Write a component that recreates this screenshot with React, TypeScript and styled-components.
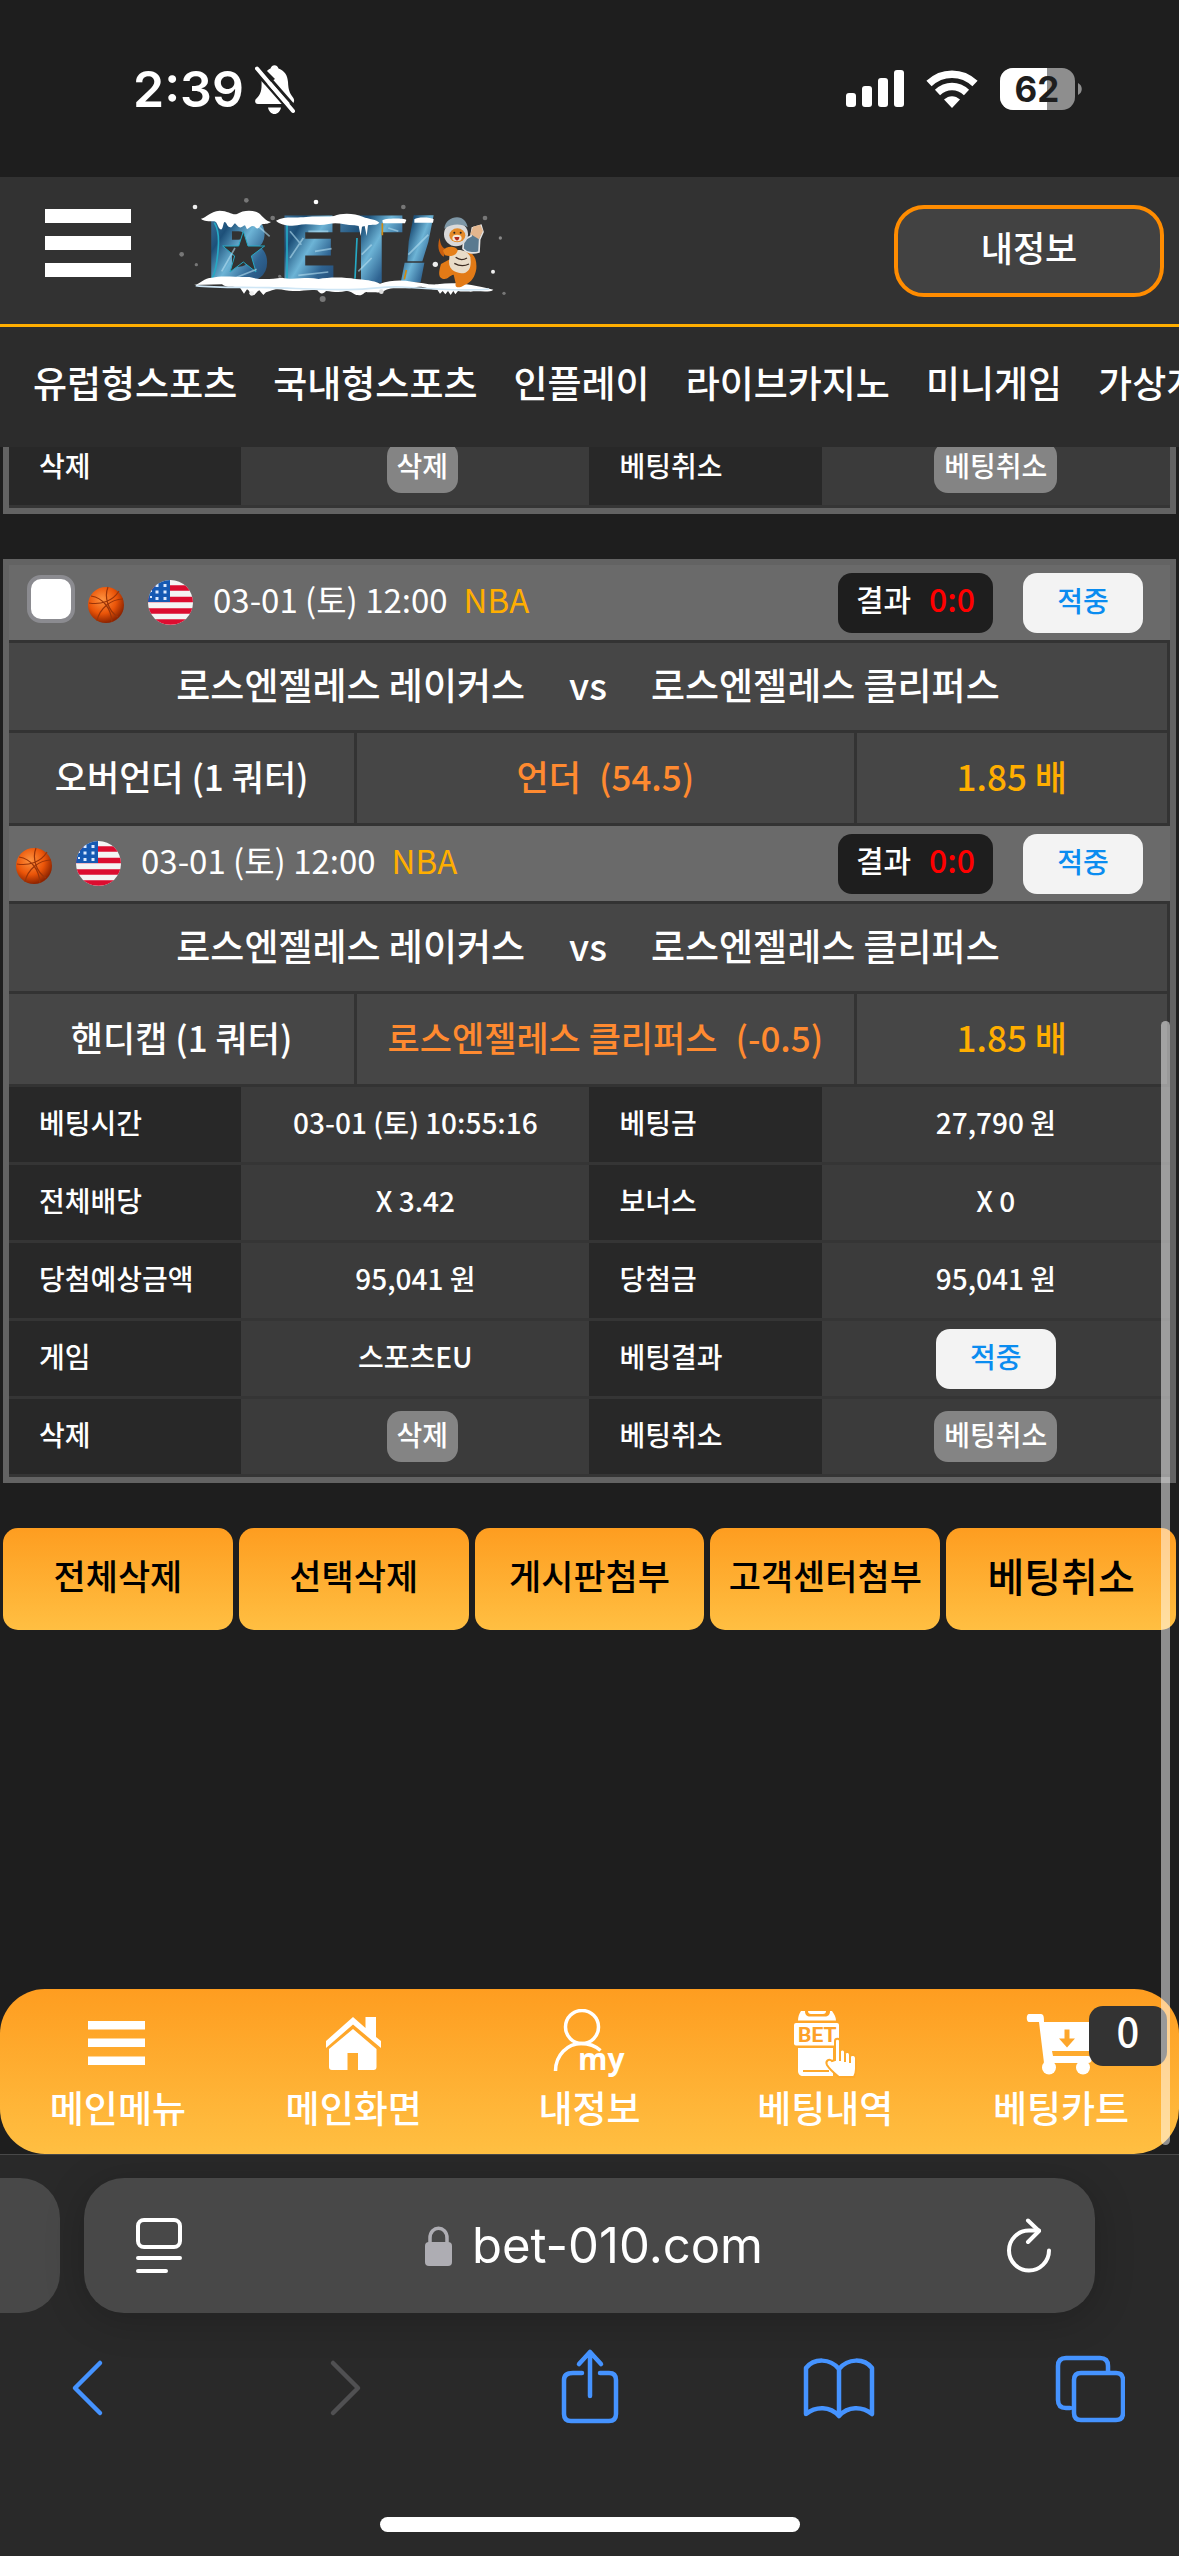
import React from "react";
import styled, { createGlobalStyle } from "styled-components";

const kr = `"Noto Sans CJK KR", "Noto Sans", sans-serif`;
const latin = `Inter, "Liberation Sans", sans-serif`;
const orangeFade = "linear-gradient(180deg, #fe9d20 0%, #ffbf42 100%)";

const GlobalStyle = createGlobalStyle`
  *, *::before, *::after { box-sizing: border-box; }
  body { margin: 0; background: #1e1e1e; }
  button, input { font: inherit; color: inherit; margin: 0; }
  button { border: 0; padding: 0; background: none; cursor: pointer; }
  a { color: inherit; text-decoration: none; }
  svg { display: block; flex: none; }
`;

const Screen = styled.div`
  position: relative;
  display: flex;
  flex-direction: column;
  min-height: 100vh;
  overflow: hidden;
  background: #1e1e1e;
  color: #fff;
  font-family: ${kr};
  font-weight: 500;
`;

/* Status bar */

const StatusBar = styled.div`
  display: flex;
  align-items: center;
  justify-content: space-between;
  height: 177px;
  padding: 0 96px 0 133px;
  font-family: ${latin};
`;

const StatusGroup = styled.div<{ $gap: number }>`
  display: flex;
  align-items: center;
  gap: ${(p) => p.$gap}px;
`;

const Clock = styled.time`
  font-size: 50px;
  font-weight: 600;
  line-height: 60px;
`;

/* Site header */

const Header = styled.header`
  display: flex;
  align-items: center;
  height: 150px;
  padding: 0 15px 0 45px;
  background: #323232;
  border-bottom: 3px solid #ffae00;
`;

const HeaderMenu = styled.button`
  display: grid;
  gap: 13px;
  width: 86px;
  margin-bottom: 15px;
`;

const Bar = styled.span`
  display: block;
  height: 14px;
  background: #fff;
`;

const LogoLink = styled.a`
  margin-left: 44px;
`;

const MyInfo = styled.button`
  width: 270px;
  height: 92px;
  margin-left: auto;
  padding-bottom: 8px;
  border: 4px solid #ff8c00;
  border-radius: 30px;
  background: #424242;
  font-size: 35px;
  line-height: 48px;
`;

const Nav = styled.nav`
  display: flex;
  gap: 36px;
  height: 120px;
  padding: 28px 0 0 33px;
  overflow: hidden;
  background: #2c2c2c;
  font-size: 37px;
  line-height: 54px;
  white-space: nowrap;
`;

/* Tickets */

const Main = styled.main`
  flex: 1;
  display: flex;
  flex-direction: column;
  padding: 0 3px;
`;

const ScrolledAway = styled.div`
  display: flex;
  align-items: flex-end;
  height: 67px;
  margin-bottom: 45px;
  overflow: hidden;
`;

const Ticket = styled.section<{ $open?: boolean }>`
  flex: 1 1 auto;
  border: 6px solid #636363;
  ${(p) => p.$open && "border-top-width: 0;"}
`;

const TicketSlot = styled.div`
  display: flex;
`;

const EventHead = styled.div`
  display: flex;
  align-items: center;
  height: 78px;
  padding: 0 27px 0 6px;
  background: #6a6a6a;
  border-bottom: 3px solid #333;
`;

const PickLabel = styled.label`
  display: flex;
  margin: 0 12px 8px 12px;
`;

const PickBox = styled.input`
  appearance: none;
  width: 48px;
  height: 48px;
  border: 4px solid #8b8b90;
  border-radius: 14px;
  background: #fff;
`;

const FlagSlot = styled.span`
  margin: 0 20px 0 23px;
`;

const EventTime = styled.span`
  padding-bottom: 8px;
  font-size: 33px;
  font-weight: 400;
  line-height: 48px;
`;

const League = styled.span`
  margin-left: 16px;
  color: #ffae00;
`;

const Score = styled.span`
  display: flex;
  align-items: center;
  justify-content: center;
  gap: 18px;
  width: 155px;
  height: 60px;
  margin-left: auto;
  padding-bottom: 10px;
  border-radius: 14px;
  background: #1e1e1e;
  font-size: 30px;
  line-height: 42px;
`;

const ScoreValue = styled.b`
  color: #f00;
  font-size: 32px;
  font-weight: 500;
`;

const Hit = styled.span<{ $push?: boolean }>`
  display: inline-flex;
  align-items: center;
  justify-content: center;
  width: 120px;
  height: 60px;
  margin-left: ${(p) => (p.$push ? 30 : 0)}px;
  padding-bottom: 6px;
  border-radius: 14px;
  background: #f3f3f3;
  color: #0a8cf0;
  font-size: 28px;
  line-height: 40px;
`;

const Teams = styled.div`
  display: flex;
  align-items: center;
  justify-content: center;
  gap: 44px;
  height: 90px;
  padding-bottom: 6px;
  border-bottom: 3px solid #333;
  border-right: 3px solid #333;
  background: #464646;
  font-size: 37px;
  line-height: 54px;
`;

const Market = styled.div`
  display: grid;
  grid-template-columns: 30fr 43fr 27fr;
  height: 93px;
  font-size: 35px;
  line-height: 51px;
`;

const MarketCell = styled.div<{ $color?: string }>`
  display: flex;
  align-items: center;
  justify-content: center;
  gap: 18px;
  padding-bottom: 5px;
  border-bottom: 3px solid #333;
  border-right: 3px solid #333;
  background: #464646;
  color: ${(p) => p.$color ?? "#fff"};
  white-space: nowrap;
`;

const Info = styled.table`
  width: 100%;
  table-layout: fixed;
  border-spacing: 0;
  font-size: 28px;
  line-height: 40px;
`;

const InfoLabel = styled.th`
  width: 20%;
  height: 78px;
  padding: 0 0 5px 30px;
  border-bottom: 3px solid #353535;
  background: #282828;
  font-weight: 500;
  text-align: left;
`;

const InfoValue = styled.td<{ $chip?: boolean }>`
  width: 30%;
  height: 78px;
  padding: ${(p) => (p.$chip ? "0" : "0 0 5px")};
  border-bottom: 3px solid #353535;
  background: #3b3b3b;
  text-align: center;
  vertical-align: middle;
`;

const ChipRow = styled.div<{ $lead?: boolean }>`
  display: flex;
  justify-content: center;
  padding-left: ${(p) => (p.$lead ? 14 : 0)}px;
`;

const Chip = styled.button`
  height: 51px;
  padding: 0 10px 5px;
  border-radius: 14px;
  background: #848484;
  line-height: 40px;
`;

const Actions = styled.div`
  display: grid;
  grid-template-columns: repeat(5, 1fr);
  gap: 6px;
  margin-top: 45px;
`;

const Action = styled.button<{ $strong?: boolean }>`
  height: 102px;
  padding-bottom: 8px;
  border-radius: 15px;
  background: ${orangeFade};
  color: #000;
  font-size: ${(p) => (p.$strong ? 40 : 35)}px;
  line-height: 58px;
  white-space: nowrap;
`;

/* Bottom navigation */

const TabBar = styled.nav`
  position: relative;
  display: grid;
  grid-template-columns: repeat(5, 1fr);
  height: 165px;
  border-radius: 45px;
  background: ${orangeFade};
`;

const Tab = styled.a`
  display: flex;
  flex-direction: column;
  align-items: center;
  padding-top: 20px;
  font-size: 37px;
  line-height: 52px;
  white-space: nowrap;
`;

const CartCount = styled.span`
  position: absolute;
  top: 17px;
  right: 12px;
  width: 78px;
  height: 60px;
  border-radius: 14px;
  background: #333;
  font-size: 40px;
  line-height: 49px;
  text-align: center;
`;

const ScrollThumb = styled.div`
  position: absolute;
  top: 1021px;
  right: 9px;
  bottom: 411px;
  width: 9px;
  border-radius: 5px;
  background: rgba(255, 255, 255, 0.5);
`;

/* Browser chrome */

const Browser = styled.footer`
  display: flex;
  flex-direction: column;
  height: 402px;
  border-top: 1px solid #484848;
  background: #292929;
  font-family: ${latin};
  font-weight: 400;
`;

const AddressRow = styled.div`
  display: flex;
  gap: 24px;
  padding: 23px 84px 0 0;
`;

const PreviousPage = styled.div`
  width: 60px;
  height: 135px;
  border-radius: 0 40px 40px 0;
  background: #484848;
`;

const Address = styled.div`
  flex: 1;
  display: flex;
  align-items: center;
  justify-content: space-between;
  height: 135px;
  padding: 0 42px 0 51px;
  border-radius: 40px;
  background: #484848;
  box-shadow: 0 6px 40px rgba(0, 0, 0, 0.2);
`;

const Url = styled.button`
  display: flex;
  align-items: center;
  gap: 20px;
  font-size: 49px;
  line-height: 60px;
`;

const Toolbar = styled.div`
  display: flex;
  justify-content: space-between;
  padding: 35px 54px 0 52px;
`;

const HomeIndicator = styled.div`
  width: 420px;
  height: 15px;
  margin: auto auto 24px;
  border-radius: 8px;
  background: #fff;
`;

/* Drawings */

const BellOff = () => (
  <svg width="40" height="50" viewBox="0 0 40 50" fill="#fff">
    <path d="M10 9C13 6 14 5 15.500 4.500c1-4.500 7-4.500 8 0 6.500 2.500 9 7 9.500 13.500 .4 8 1.500 11 5 15.500 1.500 2 1.500 4 0 6H6z" />
    <path d="M0 8l12-1 8 8L6 24z" fill="#1e1e1e" />
    <path d="M6.500 17l22 23H3c-2.500 0-3.500-2-2.500-4.500 5-5 6.500-8 6-18.500zM13 43.500h13c-.8 4-3.500 6.500-6.500 6.500s-5.700-2.500-6.500-6.500z" />
    <path d="M4.500 2.500l36 41" stroke="#1e1e1e" strokeWidth="3" />
    <path d="M0 7.500l34 39" stroke="#1e1e1e" strokeWidth="2.500" />
    <path d="M2 4.500l36 42.500" stroke="#fff" strokeWidth="4" strokeLinecap="round" />
  </svg>
);

const Signal = () => (
  <svg width="58" height="38" viewBox="0 0 58 38" fill="#fff">
    <rect x="0" y="23" width="10" height="14" rx="3" />
    <rect x="16" y="16" width="10" height="21" rx="3" />
    <rect x="32" y="8" width="10" height="29" rx="3" />
    <rect x="48" y="0" width="10" height="37" rx="3" />
  </svg>
);

const Wifi = () => (
  <svg width="52" height="38" viewBox="0 0 52 38" fill="none" stroke="#fff" strokeWidth="7.500">
    <path d="M3 13.500c13-12.500 33-12.500 46 0" />
    <path d="M11.500 22.500c8.500-8 20.500-8 29 0" />
    <path d="M18 29.500c5-4.500 11-4.500 16 0L26 38z" fill="#fff" stroke="none" />
  </svg>
);

const Battery = () => (
  <svg width="83" height="42" viewBox="0 0 83 42">
    <rect width="75" height="42" rx="13" fill="#8e8e8e" />
    <path d="M13 0h34v42H13a13 13 0 0 1-13-13V13A13 13 0 0 1 13 0z" fill="#fff" />
    <path d="M78 15c5 2.500 5 9.500 0 12z" fill="#8e8e8e" />
    <text x="37" y="34" textAnchor="middle" fontFamily="Inter, sans-serif" fontWeight="700" fontSize="35" fill="#1e1e1e">
      62
    </text>
  </svg>
);

const flakes: [number, number, number, string][] = [
  [60, 57, 7, "#eee"], [214, 37, 7, "#777"], [423, 42, 7, "#fff"], [685, 57, 7, "#777"],
  [20, 199, 7, "#777"], [293, 90, 7, "#777"], [930, 90, 7, "#777"], [976, 150, 5, "#888"],
  [64, 230, 5, "#777"], [314, 265, 5, "#777"], [954, 251, 6, "#eee"], [987, 316, 5, "#777"],
  [230, 316, 7, "#eee"], [443, 333, 9, "#777"], [619, 311, 7, "#ddd"], [781, 229, 8, "#eee"],
];

const Logo = () => (
  <svg width="345" height="125" viewBox="0 0 1035 375">
    <defs>
      <linearGradient id="ice" x1="0" y1="0" x2="1" y2="1">
        <stop offset="0" stopColor="#4f86ad" />
        <stop offset="0.3" stopColor="#1d5079" />
        <stop offset="0.5" stopColor="#6db4d6" />
        <stop offset="0.7" stopColor="#2f6492" />
        <stop offset="1" stopColor="#1d3b63" />
      </linearGradient>
    </defs>
    <g
      fontFamily='"DejaVu Sans", sans-serif'
      fontWeight="700"
      fontSize="256"
      fill="url(#ice)"
      stroke="url(#ice)"
      strokeWidth="14"
      strokeLinejoin="miter"
    >
      <text x="92" y="276">B</text>
      <text x="312" y="276">E</text>
      <text x="502" y="276">T</text>
      <text x="668" y="276" fontStyle="italic">!</text>
    </g>
    <path d="M118 104c12 20 14 40 12 70s-4 70-18 96M336 108v164M546 150l-6 122" fill="none" stroke="#25a9c4" strokeWidth="5" />
    <path d="M622 106v36M694 246l-6 28" stroke="#d08a10" strokeWidth="5" />
    <path d="M205 130l14 44h50l-40 30 14 48-38-30-40 30 14-48-36-30h48z" fill="#323232" stroke="#25a9c4" strokeWidth="3" />
    <path
      d="M140 250l40-70M185 268l60-24M345 210l40-60M370 262l90-10M560 200l30-30M700 200l60-60M345 130l34 40M250 115l34 30M550 250l40-40M400 130l60 0M420 190l50-8M640 120l30 10"
      stroke="#b4def0"
      strokeWidth="5"
      opacity="0.6"
    />
    <g fill="#fff">
      <path d="M78 92c16-2 26-22 56-24 26 0 38 14 52 10 18-12 48-14 66-2 12 10 20 24 36 26-10 8-22 4-30 8-6 10-12 16-18 6-10-6-16 4-24 8l-6-12c-8 2-10 10-20 4l-10-10c-6 4-8 14-14 12-10 0-10-16-18-16-4 4-4 26-12 22-8-4-8-22-18-24-16 0-32 0-40-8z" />
      <path d="M303 98c24-14 52-8 82-10 30-6 62 0 92-4 24-10 62-8 86 2 20 8 42 8 50 18-10 10-22 4-34 8l-4 32-6-30-8 2-4 28-6-30-12-2c-30 0-48-10-78-4-34 8-62-4-94 4-24 4-52-2-64-14z" />
      <path d="M622 98c4-8 66-8 72-2l-4 10h-66zM718 94c10-8 50-6 58 0l-2 10h-56z" />
      <path d="M57 291c20-4 30-22 54-22 32-8 78 0 112-2 34 10 66 6 98 2 34 8 74-4 110 4 30-6 78-6 110 0 28 2 52 4 74 14 30-10 64-12 96-6 26 2 50 10 76 8 56-8 102 0 168 16-10 10-48 2-68 6-14-2-24 2-38-2l-8 10-6-10-8 12-8-12-8 10-8-10-8 8-8-12c-26 0-44-14-72-6-20 4-42 0-60 2-24 0-30 16-52 12l-26 0c-8-6-12 12-28 8-14 0-20-14-36-12-20 6-40 2-60 0-8 10-18 10-26-2-26-4-50 4-74 2-22 0-44-12-68 0l-12 4-8 8-12-14c-10 4-12 18-22 14-8-4-8-18-16-16l-8 12-12-18c-20-4-40 2-54-10z" />
    </g>
    <path d="M62 293c60 8 140 4 220 6s160 6 240 6 100-12 160-8 180 14 260 6" fill="none" stroke="#cfe6f5" strokeWidth="5" />
    <g>
      <path d="M806 206c-16-8-20-34-12-56 2 20 8 30 20 34z" fill="#c96010" />
      <path d="M868 190c30 2 38 24 36 52-4 24-14 40-34 48-14 10-32 12-28-4l-6-26c-14 2-16 16-34 12-14-4-10-24-4-44z" fill="#e27a16" />
      <path d="M824 196c20-18 56-10 62 12 4 26-2 44-20 48-20 0-44-8-44-34z" fill="#e9dcc8" />
      <path d="M842 208c10 8 24 8 34 2M838 226c14 8 32 8 44 2" stroke="#3b2a20" strokeWidth="4" fill="none" />
      <path d="M804 188c8-14 36-16 44-2-2 16-20 22-38 16z" fill="#e6801a" />
      <path d="M866 156l22-12 4-24 26-8 6 20-10 22-2 38c-18 6-38 2-48-10z" fill="#5a7a90" stroke="#e5e5e5" strokeWidth="5" />
      <path d="M886 138l8-22 22-6 8 18-12 26z" fill="#e3b68e" />
      <circle cx="843" cy="139" r="36" fill="#d9d9d9" />
      <path d="M808 122c2-22 20-34 38-34s30 14 32 30c-20-12-46-12-70 4z" fill="#7e97a6" />
      <ellipse cx="847" cy="142" rx="24" ry="21" fill="#e48a28" />
      <ellipse cx="846" cy="150" rx="14" ry="10" fill="#f4e8d8" />
      <path d="M838 147h15c0 12-12 15-15 0z" fill="#b02a20" />
      <circle cx="838" cy="134" r="3" fill="#222" />
      <circle cx="857" cy="134" r="3" fill="#222" />
    </g>
    {flakes.map(([x, y, r, c]) => (
      <circle key={`${x}-${y}`} cx={x} cy={y} r={r} fill={c} />
    ))}
  </svg>
);

const Ball = () => (
  <svg width="38" height="42" viewBox="0 0 38 42">
    <defs>
      <radialGradient id="ballFill" cx="0.4" cy="0.35" r="0.65">
        <stop offset="0" stopColor="#ff9440" />
        <stop offset="0.6" stopColor="#ea5408" />
        <stop offset="1" stopColor="#8e2400" />
      </radialGradient>
    </defs>
    <circle cx="19" cy="23" r="18" fill="url(#ballFill)" />
    <path
      d="M2 21c12 2 24-2 30-12M10 39c2-12 14-22 26-22M21 5c-4 10 0 24 10 30M4 14c12 2 20 12 21 26"
      fill="none"
      stroke="#9a3408"
      strokeWidth="1.200"
    />
  </svg>
);

const Flag = () => (
  <svg width="45" height="45" viewBox="0 0 45 45">
    <clipPath id="flagRound">
      <circle cx="22.500" cy="22.500" r="22.500" />
    </clipPath>
    <g clipPath="url(#flagRound)">
      <rect width="45" height="45" fill="#f4f4f4" />
      <path d="M0 8h45M0 19.500h45M0 31h45M0 42h45" stroke="#dc0d30" strokeWidth="5.500" />
      <rect width="22" height="22" fill="#1559b3" />
      <path d="M9 4v16M17 4v16" stroke="#dceaff" strokeWidth="3" strokeDasharray="3 3.500" />
      <path d="M3 10v10" stroke="#dceaff" strokeWidth="2" strokeDasharray="2 4" />
    </g>
  </svg>
);

const MenuIcon = () => (
  <svg width="72" height="72" viewBox="0 0 72 72" fill="#fff">
    <path d="M6 12h57v8.500H6zM6 29.500h57V38H6zM6 47.500h57V56H6z" />
  </svg>
);

const HouseIcon = () => (
  <svg width="72" height="72" viewBox="0 0 72 72" fill="#fff">
    <path d="M8 32L35 8l12.500 11V8H58v20l5 4v7L35 15.500 8 39z" />
    <path d="M35 20l23.500 20v18c0 2-1 3-3 3H40V44H29.500v17H14c-2 0-3-1-3-3V40z" />
  </svg>
);

const PersonIcon = () => (
  <svg width="72" height="72" viewBox="0 0 72 72" fill="none" stroke="#fff" strokeWidth="3.500">
    <circle cx="29" cy="18" r="16.500" />
    <path d="M2.500 62c0-16 12-27.500 26-27.500 7 0 14 2.500 19 7" />
    <text x="25" y="61" fill="#fff" stroke="none" fontFamily='"Open Sans", sans-serif' fontWeight="700" fontSize="30">
      my
    </text>
  </svg>
);

const SlipIcon = () => (
  <svg width="72" height="72" viewBox="0 0 72 72" fill="#fff">
    <path d="M12 2h4c0 4 2 5.500 5 5.500h15C39 7.500 41 6 41 2h2c2 3 4 6 4 9.500H9C9 8 10 5 12 2zM19 2h18c0 2-1 3-3 3H22c-2 0-3-1-3-3z" />
    <rect x="5" y="14" width="45" height="22.500" rx="2" />
    <path d="M9 39h35v28H14c-3 0-5-2-5-5z" />
    <path d="M14 62h26" stroke="#fda92c" strokeWidth="2" />
    <text x="9" y="33" fill="#fda028" fontFamily="Roboto, sans-serif" fontWeight="700" fontSize="21">
      BET
    </text>
    <path
      d="M46 51V32c0-3 5-3 5 0v10c1-2 5-2 5 1v1c2-2 5-1 5 2v1c2-2 6-1 6 2v11c0 4-1 6-2 8H50c-5-4-9-7-12-12-2-4 2-7 5-4z"
      stroke="#fda92c"
      strokeWidth="2"
    />
    <path d="M51 41v11M56 45v8M61 47v7" stroke="#fda92c" strokeWidth="2" />
  </svg>
);

const CartIcon = () => (
  <svg width="72" height="72" viewBox="0 0 72 72" fill="#fff">
    <path d="M4 5h12c3 0 3 4 3 8h49v24c0 3-2 5-5 5H27l1 5h35c5 0 5 7 0 7H19L14 13H4c-3 0-3-8 0-8z" />
    <circle cx="24" cy="58.500" r="7" />
    <circle cx="58" cy="58.500" r="7" />
    <path d="M39.500 20.500h5v9H50l-8 9-8-9h5.500z" fill="#fda62a" />
  </svg>
);

const PageIcon = () => (
  <svg width="48" height="56" viewBox="0 0 48 56" fill="none" stroke="#fff" strokeWidth="4" strokeLinecap="round">
    <rect x="3" y="2" width="42" height="27" rx="6" />
    <path d="M3 40h42M3 53h28" />
  </svg>
);

const LockIcon = () => (
  <svg width="27" height="40" viewBox="0 0 27 40">
    <rect y="16" width="27" height="24" rx="4" fill="#aeadb3" />
    <path d="M5 18v-6c0-13 17-13 17 0v6" fill="none" stroke="#aeadb3" strokeWidth="3.500" />
  </svg>
);

const ReloadIcon = () => (
  <svg width="48" height="56" viewBox="0 0 48 56" fill="none" stroke="#fff" strokeWidth="4" strokeLinecap="round" strokeLinejoin="round">
    <path d="M44 32.500a20 20 0 1 1-20-20h10" />
    <path d="M23 2.500l11 10.500-11 11" />
  </svg>
);

const ToolIcon = ({ d, color = "#4593ff" }: { d: string; color?: string }) => (
  <svg width="74" height="76" viewBox="0 0 74 76" fill="none" stroke={color} strokeWidth="4.500" strokeLinecap="round" strokeLinejoin="round">
    <path d={d} />
  </svg>
);

const tools = [
  { label: "뒤로", d: "M48 15L23 40l25 25" },
  { label: "앞으로", d: "M31 15l25 25-25 25", color: "#505052" },
  { label: "공유", d: "M30 25h-9q-9 0-9 7v34q0 7 7 7h38q7 0 7-7V32q0-7-7-7h-9M38 48V4M27 16L38 4l11 12" },
  { label: "책갈피", d: "M38 21C29 10 13 10 5 20v46c10-8 24-8 33 2 9-10 23-10 33-2V20C63 10 47 10 38 21v47" },
  { label: "탭", d: "M19 60h-4q-8 0-8-8V18q0-8 8-8h34q8 0 8 8v6M30 25h35q7 0 7 7v33q0 7-7 7H30q-7 0-7-7V32q0-7 7-7z" },
];

/* Content */

const menu = ["유럽형스포츠", "국내형스포츠", "인플레이", "라이브카지노", "미니게임", "가상게임"];

type BetEvent = { market: string; pick: string; line: string; selectable?: boolean };

const events: BetEvent[] = [
  { market: "오버언더 (1 쿼터)", pick: "언더", line: "(54.5)", selectable: true },
  { market: "핸디캡 (1 쿼터)", pick: "로스엔젤레스 클리퍼스", line: "(-0.5)" },
];

const details = [
  ["베팅시간", "03-01 (토) 10:55:16", "베팅금", "27,790 원"],
  ["전체배당", "X 3.42", "보너스", "X 0"],
  ["당첨예상금액", "95,041 원", "당첨금", "95,041 원"],
];

const actions = ["전체삭제", "선택삭제", "게시판첨부", "고객센터첨부", "베팅취소"];

const tabs = [
  { label: "메인메뉴", icon: <MenuIcon /> },
  { label: "메인화면", icon: <HouseIcon /> },
  { label: "내정보", icon: <PersonIcon /> },
  { label: "베팅내역", icon: <SlipIcon /> },
  { label: "베팅카트", icon: <CartIcon /> },
];

const ManageRow = () => (
  <tr>
    <InfoLabel scope="row">삭제</InfoLabel>
    <InfoValue $chip>
      <ChipRow $lead>
        <Chip type="button">삭제</Chip>
      </ChipRow>
    </InfoValue>
    <InfoLabel scope="row">베팅취소</InfoLabel>
    <InfoValue $chip>
      <ChipRow>
        <Chip type="button">베팅취소</Chip>
      </ChipRow>
    </InfoValue>
  </tr>
);

const EventBlock = ({ market, pick, line, selectable }: BetEvent) => (
  <>
    <EventHead>
      {selectable && (
        <PickLabel>
          <PickBox type="checkbox" aria-label="베팅 선택" />
        </PickLabel>
      )}
      <Ball />
      <FlagSlot>
        <Flag />
      </FlagSlot>
      <EventTime>
        03-01 (토) 12:00<League>NBA</League>
      </EventTime>
      <Score>
        결과<ScoreValue>0:0</ScoreValue>
      </Score>
      <Hit $push>적중</Hit>
    </EventHead>
    <Teams>
      <span>로스엔젤레스 레이커스</span>
      <span>vs</span>
      <span>로스엔젤레스 클리퍼스</span>
    </Teams>
    <Market>
      <MarketCell>{market}</MarketCell>
      <MarketCell $color="#ff8a30">
        <span>{pick}</span>
        <span>{line}</span>
      </MarketCell>
      <MarketCell $color="#ffae00">1.85 배</MarketCell>
    </Market>
  </>
);

export default function App() {
  return (
    <Screen>
      <GlobalStyle />
      <StatusBar>
        <StatusGroup $gap={11}>
          <Clock>2:39</Clock>
          <BellOff />
        </StatusGroup>
        <StatusGroup $gap={22}>
          <Signal />
          <Wifi />
          <Battery />
        </StatusGroup>
      </StatusBar>

      <Header>
        <HeaderMenu type="button" aria-label="메뉴">
          <Bar />
          <Bar />
          <Bar />
        </HeaderMenu>
        <LogoLink href="#" aria-label="BET!">
          <Logo />
        </LogoLink>
        <MyInfo type="button">내정보</MyInfo>
      </Header>
      <Nav>
        {menu.map((item) => (
          <a key={item} href="#">
            {item}
          </a>
        ))}
      </Nav>

      <Main>
        <ScrolledAway>
          <Ticket $open>
            <Info>
              <tbody>
                <ManageRow />
              </tbody>
            </Info>
          </Ticket>
        </ScrolledAway>
        <TicketSlot>
          <Ticket>
            {events.map((event) => (
              <EventBlock key={event.market} {...event} />
            ))}
            <Info>
              <tbody>
                {details.map(([a, b, c, d]) => (
                  <tr key={a}>
                    <InfoLabel scope="row">{a}</InfoLabel>
                    <InfoValue>{b}</InfoValue>
                    <InfoLabel scope="row">{c}</InfoLabel>
                    <InfoValue>{d}</InfoValue>
                  </tr>
                ))}
                <tr>
                  <InfoLabel scope="row">게임</InfoLabel>
                  <InfoValue>스포츠EU</InfoValue>
                  <InfoLabel scope="row">베팅결과</InfoLabel>
                  <InfoValue $chip>
                    <ChipRow>
                      <Hit>적중</Hit>
                    </ChipRow>
                  </InfoValue>
                </tr>
                <ManageRow />
              </tbody>
            </Info>
          </Ticket>
        </TicketSlot>
        <Actions>
          {actions.map((label) => (
            <Action key={label} type="button" $strong={label === "베팅취소"}>
              {label}
            </Action>
          ))}
        </Actions>
      </Main>

      <TabBar>
        {tabs.map(({ label, icon }) => (
          <Tab key={label} href="#">
            {icon}
            {label}
          </Tab>
        ))}
        <CartCount>0</CartCount>
      </TabBar>

      <Browser>
        <AddressRow>
          <PreviousPage />
          <Address>
            <button type="button" aria-label="페이지 메뉴">
              <PageIcon />
            </button>
            <Url type="button">
              <LockIcon />
              bet-010.com
            </Url>
            <button type="button" aria-label="새로고침">
              <ReloadIcon />
            </button>
          </Address>
        </AddressRow>
        <Toolbar>
          {tools.map(({ label, d, color }) => (
            <button key={label} type="button" aria-label={label}>
              <ToolIcon d={d} color={color} />
            </button>
          ))}
        </Toolbar>
        <HomeIndicator />
      </Browser>
      <ScrollThumb />
    </Screen>
  );
}
